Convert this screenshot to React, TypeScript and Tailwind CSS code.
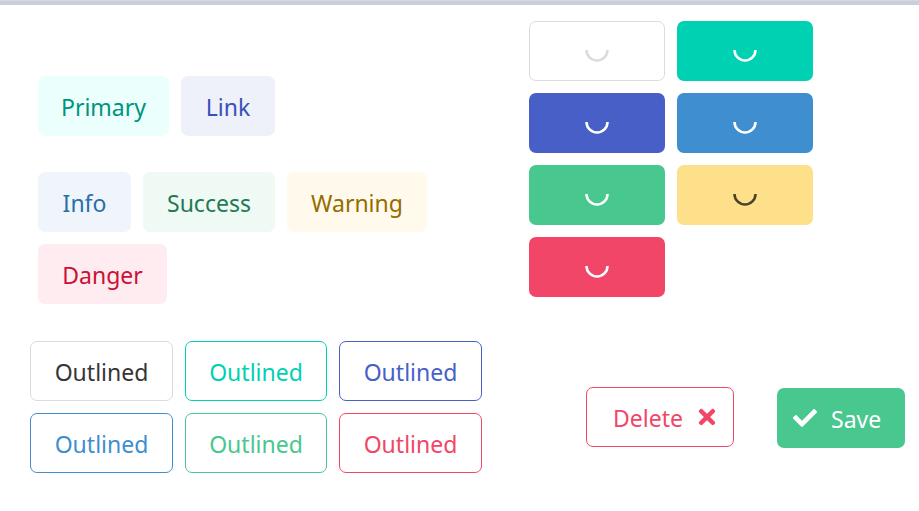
import React from "react";
import { FaTimes, FaCheck } from "react-icons/fa";

function Spinner({ color }: { color: string }) {
  return (
    <svg width="24" height="24" viewBox="0 0 24 24" className="block">
      <path d="M 1.5 11 A 10.5 10.5 0 0 0 22.5 11" fill="none" stroke={color} strokeWidth="2.6" />
    </svg>
  );
}

const font = { fontFamily: '"Noto Sans", "Open Sans", sans-serif' };

export default function App() {
  return (
    <div className="w-[919px] h-[511px] bg-white overflow-hidden text-[23px]" style={font}>
      <div className="h-[5px] bg-[#cacfdc] border-t border-[#d5d8e2]" />
      <div className="flex">
        <div className="w-[529px] pl-[38px] pt-[71px]">
          <div className="flex gap-3">
            <div className="w-[131px] h-[60px] pt-[2px] rounded-[7px] bg-[#ebfffc] text-[#00947e] flex items-center justify-center">Primary</div>
            <div className="w-[94px] h-[60px] pt-[2px] rounded-[7px] bg-[#eff1fa] text-[#3850b7] flex items-center justify-center">Link</div>
          </div>
          <div className="mt-9 flex flex-wrap gap-3 w-[400px]">
            <div className="w-[93px] h-[60px] pt-[2px] rounded-[7px] bg-[#eff5fb] text-[#296fa8] flex items-center justify-center">Info</div>
            <div className="w-[132px] h-[60px] pt-[2px] rounded-[7px] bg-[#effaf5] text-[#257953] flex items-center justify-center">Success</div>
            <div className="w-[140px] h-[60px] pt-[2px] rounded-[7px] bg-[#fffaeb] text-[#946c00] flex items-center justify-center">Warning</div>
            <div className="w-[129px] h-[60px] pt-[2px] rounded-[7px] bg-[#feecf0] text-[#cc0f35] flex items-center justify-center">Danger</div>
          </div>
        </div>
        <div className="pt-4 grid grid-cols-[136px_136px] gap-3 content-start">
          <div className="h-[60px] rounded-[7px] bg-white border border-[#dbdbdb] flex items-center justify-center"><Spinner color="#dbdbdb" /></div>
          <div className="h-[60px] rounded-[7px] bg-[#00d1b2] flex items-center justify-center"><Spinner color="#ffffff" /></div>
          <div className="h-[60px] rounded-[7px] bg-[#485fc7] flex items-center justify-center"><Spinner color="#ffffff" /></div>
          <div className="h-[60px] rounded-[7px] bg-[#3e8ed0] flex items-center justify-center"><Spinner color="#ffffff" /></div>
          <div className="h-[60px] rounded-[7px] bg-[#48c78e] flex items-center justify-center"><Spinner color="#ffffff" /></div>
          <div className="h-[60px] rounded-[7px] bg-[#ffe08a] flex items-center justify-center"><Spinner color="rgba(0,0,0,0.7)" /></div>
          <div className="h-[60px] rounded-[7px] bg-[#f14668] flex items-center justify-center"><Spinner color="#ffffff" /></div>
        </div>
      </div>
      <div className="flex">
        <div className="w-[556px] pl-[30px] pt-[37px]">
          <div className="grid grid-cols-[143px_142px_143px] gap-3">
            <div className="h-[60px] pt-[2px] rounded-[7px] border border-[#dbdbdb] text-[#363636] flex items-center justify-center">Outlined</div>
            <div className="h-[60px] pt-[2px] rounded-[7px] border border-[#00d1b2] text-[#00d1b2] flex items-center justify-center">Outlined</div>
            <div className="h-[60px] pt-[2px] rounded-[7px] border border-[#485fc7] text-[#485fc7] flex items-center justify-center">Outlined</div>
            <div className="h-[60px] pt-[2px] rounded-[7px] border border-[#3e8ed0] text-[#3e8ed0] flex items-center justify-center">Outlined</div>
            <div className="h-[60px] pt-[2px] rounded-[7px] border border-[#48c78e] text-[#48c78e] flex items-center justify-center">Outlined</div>
            <div className="h-[60px] pt-[2px] rounded-[7px] border border-[#f14668] text-[#f14668] flex items-center justify-center">Outlined</div>
          </div>
        </div>
        <div className="flex items-start pt-[83px] pl-[30px]">
          <div className="w-[148px] h-[60px] rounded-[7px] border border-[#f14668] text-[#f14668] flex items-center pl-[26px]">
            <span className="pt-[2px]">Delete</span>
            <FaTimes size={24} className="ml-[12px]" />
          </div>
          <div className="ml-[43px] mt-px w-[128px] h-[60px] rounded-[7px] bg-[#48c78e] text-white flex items-center pl-[16px]">
            <FaCheck size={24} />
            <span className="ml-[14px] pt-[2px]">Save</span>
          </div>
        </div>
      </div>
    </div>
  );
}
